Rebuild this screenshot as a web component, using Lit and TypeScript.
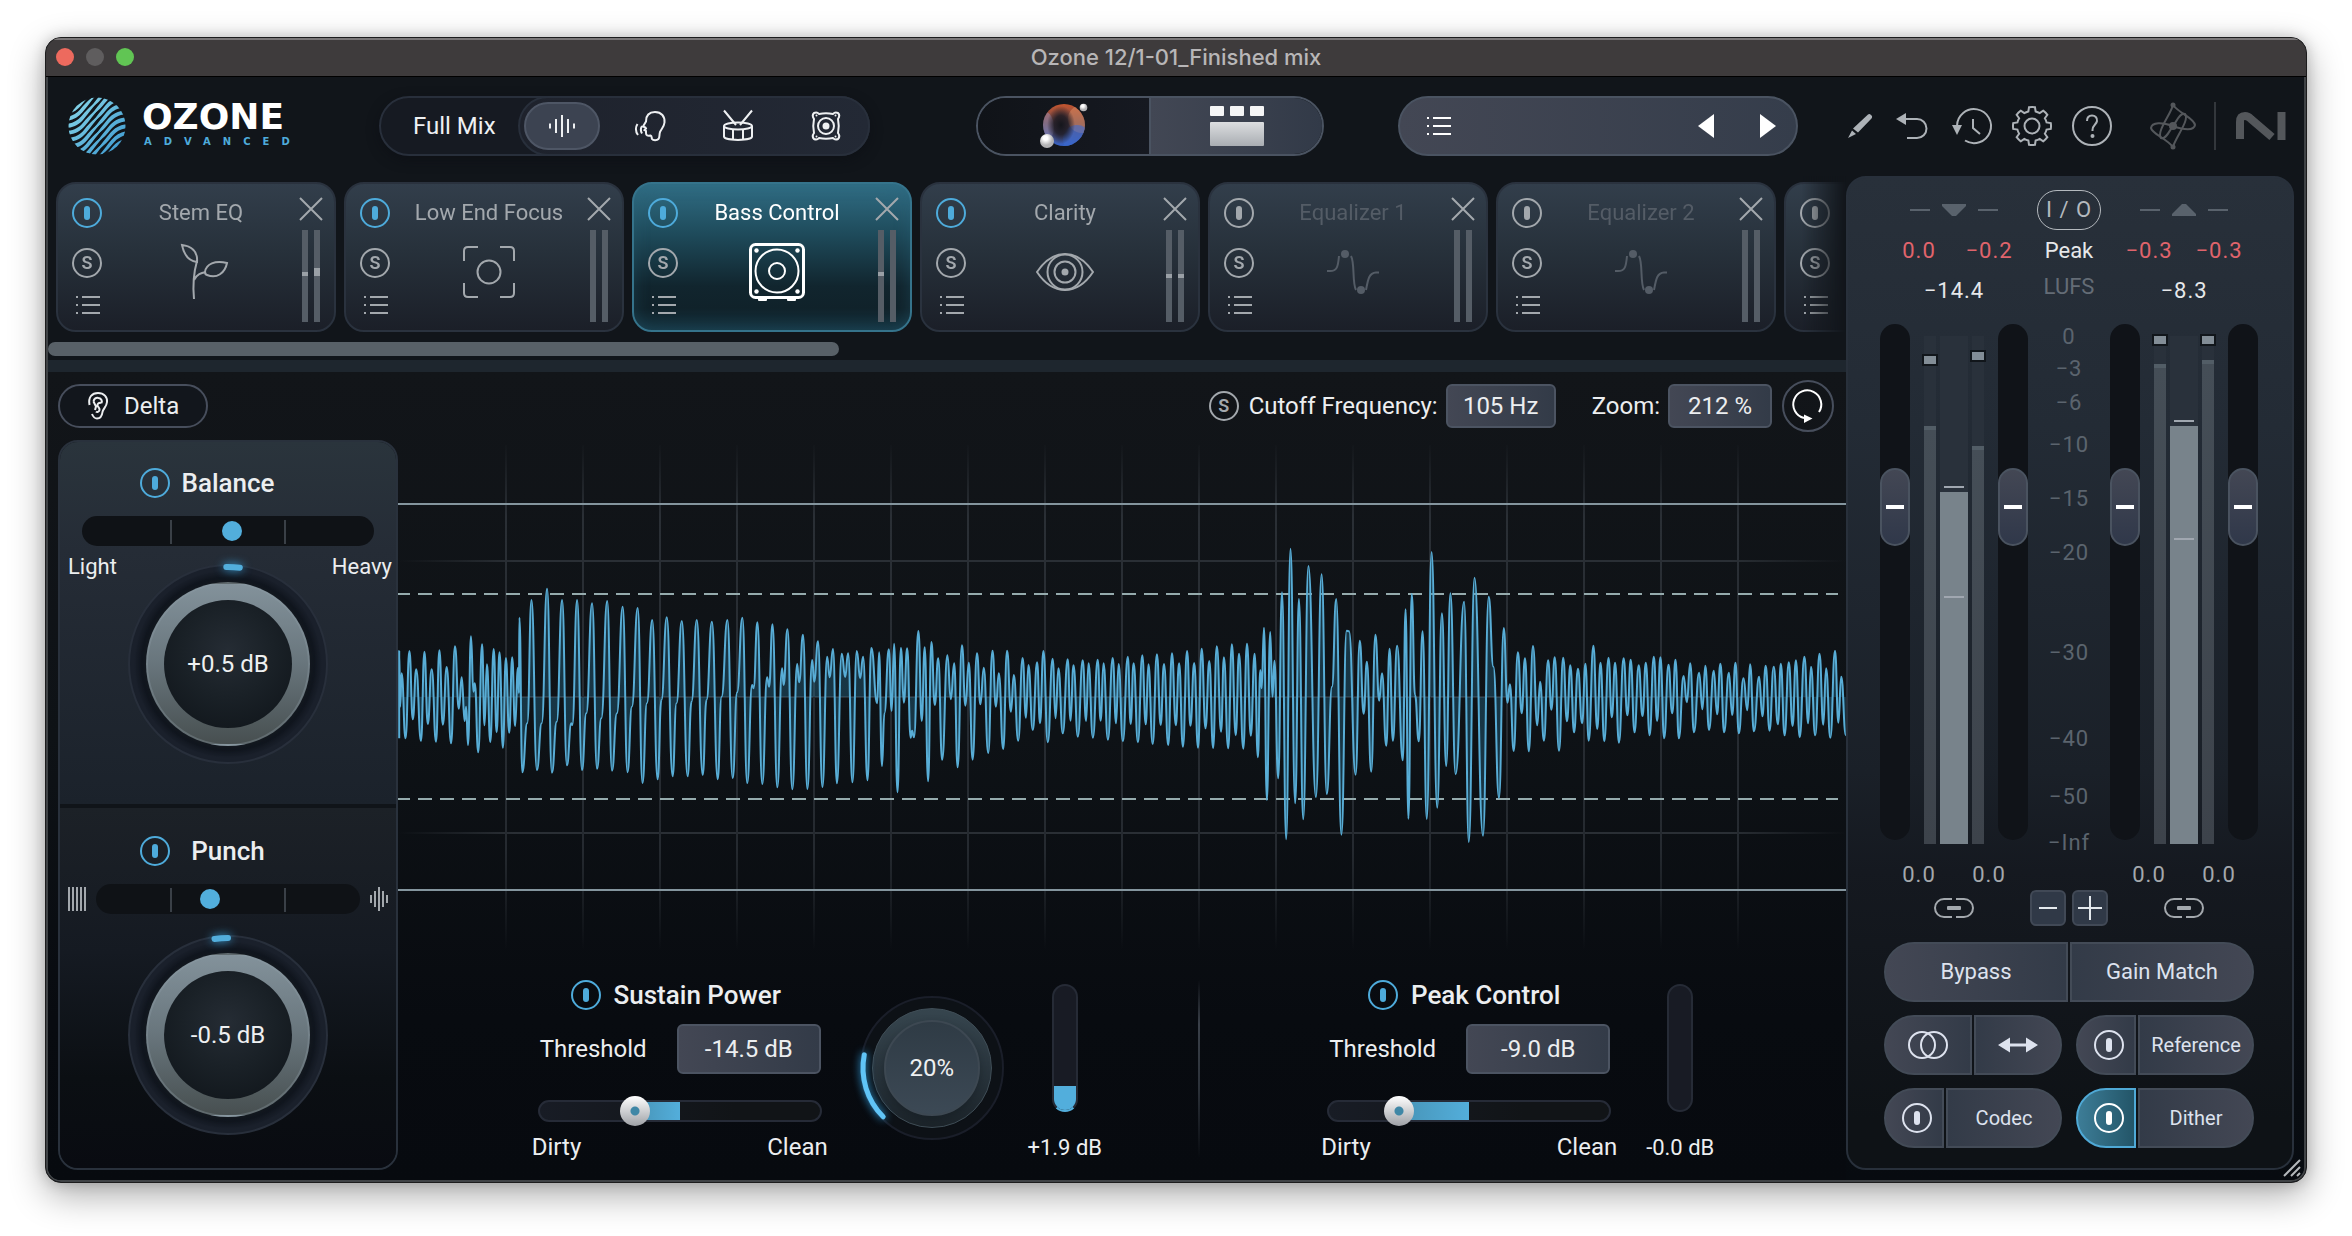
import { LitElement, html, svg, css, nothing } from "lit";
import { customElement, property } from "lit/decorators.js";
import { classMap } from "lit/directives/class-map.js";
import { styleMap } from "lit/directives/style-map.js";

const base = css`
  * { box-sizing: border-box; }
  button, input { font: inherit; color: inherit; margin: 0; }
  button { padding: 0; border: 0; background: none; display: grid; place-items: center; cursor: pointer; }
  svg { display: block; fill: none; stroke: currentColor; stroke-width: 2; overflow: visible; }
  .solid { fill: currentColor; stroke: none; }
  .power { width: 30px; height: 30px; color: #4eabdb; }
  .solo {
    width: 30px; height: 30px; border: 2px solid currentColor; border-radius: 50%;
    font-size: 18px; line-height: 24px; font-weight: 600; color: #a3a8ad;
  }
`;

const powerIcon = svg`<svg width="30" height="30" viewBox="0 0 30 30"><circle cx="15" cy="15" r="14"/><rect class="solid" x="12" y="8" width="6" height="14" rx="3"/></svg>`;
const listIcon = svg`<svg width="24" height="18" viewBox="0 0 24 18"><path d="M0 1h2M6 1h18M0 9h2M6 9h18M0 17h2M6 17h18"/></svg>`;
const closeIcon = svg`<svg width="22" height="22" viewBox="0 0 22 22"><path d="M0 0L22 22M22 0L0 22"/></svg>`;

const waveIcon = svg`<svg width="26" height="24" viewBox="0 0 26 24"><path d="M1 9.500v5M7 5v14M13 1v22M19 5v14M25 9.500v5"/></svg>`;
const voiceIcon = svg`<svg width="32" height="30" viewBox="0 0 32 30"><path d="M26 21C25 24 26 26 24.500 28C23 29.500 19 29.500 18 28C17.500 26.500 18 25 16.500 24.500C13.500 25 12 24.500 12 22V20L10.500 19L12 17.500L11.500 16.500L9 15.500L12 10.500C12 4.500 15 1 21 1C27.500 1 31 5.500 30.500 11.500C30 16 27.500 17.500 26 21Z"/><path d="M3.500 13C1.500 16 1.500 20.500 4 24M8 15C6.500 17.500 6.500 20 8 22.500"/></svg>`;
const drumIcon = svg`<svg width="30" height="31" viewBox="0 0 30 31"><path d="M1 0.500L13 15M29 0.500L17 15"/><ellipse cx="15" cy="16" rx="14" ry="3.600"/><path d="M1 16v10.500C1 31 29 31 29 26.500V16M10 19.500v9.500M20 19.500v9.500"/></svg>`;
const ampIcon = svg`<svg width="30" height="30" viewBox="0 0 30 30"><path d="M8 3Q15 1.500 22 3Q24 0.500 27 2Q29.500 4.500 27 8Q28.500 15 27 22Q29.500 25.500 27 28Q24 29.500 22 27Q15 28.500 8 27Q6 29.500 3 28Q0.500 25.500 3 22Q1.500 15 3 8Q0.500 4.500 3 2Q6 0.500 8 3Z"/><circle cx="15" cy="15" r="8"/><circle class="solid" cx="15" cy="15" r="3.500"/><circle class="solid" cx="5.500" cy="4.500" r="1"/><circle class="solid" cx="24.500" cy="4.500" r="1"/><circle class="solid" cx="5.500" cy="25.500" r="1"/><circle class="solid" cx="24.500" cy="25.500" r="1"/></svg>`;

const moduleIcons: Record<string, unknown> = {
  sprout: svg`<svg width="56" height="58" viewBox="0 0 56 58"><path d="M21 56C20 46 20 32 24 18"/><path d="M24 19C16 18 11 12 9 2C18 3 25 8 24 19Z"/><path d="M21 37C24 31 28 30 33 29"/><path d="M32 29C33 21 42 17 54 20C52 30 44 36 34 32C32 31.500 32 30 32 29Z"/></svg>`,
  focus: svg`<svg width="56" height="58" viewBox="0 0 56 58"><circle cx="28" cy="29" r="11.500"/><path d="M3 18V8Q3 4 7 4H17M39 4H49Q53 4 53 8V18M53 40V50Q53 54 49 54H39M17 54H7Q3 54 3 50V40"/></svg>`,
  speaker: svg`<svg width="56" height="58" viewBox="0 0 56 58"><rect x="1.500" y="1.500" width="53" height="53" rx="5" stroke-width="3"/><circle cx="28" cy="28" r="21.500"/><circle cx="28" cy="28" r="8"/><g class="solid"><circle cx="7.500" cy="7.500" r="2.200"/><circle cx="48.500" cy="7.500" r="2.200"/><circle cx="7.500" cy="48.500" r="2.200"/><circle cx="48.500" cy="48.500" r="2.200"/><path d="M9 55h9v2q0 1-1 1h-7q-1 0-1-1zM38 55h9v2q0 1-1 1h-7q-1 0-1-1z"/></g></svg>`,
  eye: svg`<svg width="58" height="58" viewBox="0 0 58 58"><path d="M1 29C9 17 19 11 29 11S49 17 57 29C49 41 39 47 29 47S9 41 1 29Z"/><circle cx="29" cy="29" r="17.500"/><circle cx="29" cy="29" r="10.500"/><circle class="solid" cx="29" cy="29" r="3.500"/></svg>`,
  curve: svg`<svg width="56" height="58" viewBox="0 0 56 58"><path d="M2 28H5C12 28 13 24 14 13M26 13C30 20 27 40 31 47M41 47C43 36 44 30 51 29.500H54"/><circle class="solid" cx="20" cy="11" r="4"/><circle class="solid" cx="36" cy="47" r="4"/></svg>`,
};

/** One processing module in the signal chain strip. */
@customElement("module-card")
class ModuleCard extends LitElement {
  @property() name = "";
  @property() icon = "";
  @property({ type: Boolean }) on = false;
  @property({ type: Boolean }) selected = false;
  @property({ attribute: false }) levels: number[][] = [];

  static styles = [base, css`
    :host { display: block; flex: none; width: 280px; color: #a3a8ad; }
    .card {
      height: 150px; border: 2px solid #2a323e; border-radius: 20px; padding: 12px 12px 8px 14px;
      background: linear-gradient(#323e4b, #27313b 45%, #1b1f28);
      display: grid; grid-template-columns: 30px 1fr 22px;
    }
    .card.selected {
      border-color: #35738b; color: #fff;
      background: linear-gradient(#306d84, #1e4a5a 35%, #11252e 70%, #10222a 85%, #153441);
      box-shadow: inset 0 0 16px #2d6a8055;
    }
    .left { display: grid; grid-template-rows: 34px 66px 18px; align-items: center; justify-items: center; align-content: start; }
    .left .off { color: #a3a8ad; }
    .menu { color: #a3a8ad; width: 26px; height: 18px; justify-items: end; }
    .mid { display: grid; grid-template-rows: 34px 1fr; justify-items: center; align-items: center; padding-bottom: 8px; }
    .name { font-size: 22px; line-height: 26px; white-space: nowrap; }
    .dim { color: #545c66; }
    .right { display: grid; grid-template-rows: 34px 92px; justify-items: center; align-content: start; }
    .close { width: 22px; height: 22px; color: #a3a8ad; margin-top: 2px; }
    .bars { display: flex; gap: 6px; }
    .bar { width: 6px; height: 92px; background: #555d66; position: relative; }
    .tick { position: absolute; left: 0; right: 0; background: #9aa0a6; }
  `];

  render() {
    return html`<section class=${classMap({ card: true, selected: this.selected })}>
      <div class="left">
        <button class=${classMap({ power: true, off: !this.on })} aria-label="Power">${powerIcon}</button>
        <button class="solo" aria-label="Solo">S</button>
        <button class="menu" aria-label="Presets">${listIcon}</button>
      </div>
      <div class=${classMap({ mid: true, dim: !this.on })}>
        <span class="name">${this.name}</span>
        ${moduleIcons[this.icon] ?? nothing}
      </div>
      <div class="right">
        <button class="close" aria-label="Remove">${closeIcon}</button>
        <div class="bars">${[0, 1].map((i) => html`<span class="bar">${this.levels[i]
          ? html`<span class="tick" style=${styleMap({ top: this.levels[i][0] + "px", height: this.levels[i][1] + "px" })}></span>` : nothing}</span>`)}
        </div>
      </div>
    </section>`;
  }
}

/** Point on a circle of radius r; angle in degrees clockwise from twelve o'clock. */
const polar = (r: number, deg: number) => {
  const a = (deg * Math.PI) / 180;
  return `${(r * Math.sin(a)).toFixed(2)} ${(-r * Math.cos(a)).toFixed(2)}`;
};
const arcPath = (r: number, from: number, to: number) => `M${polar(r, from)}A${r} ${r} 0 0 1 ${polar(r, to)}`;

@customElement("value-knob")
class ValueKnob extends LitElement {
  @property() text = "";
  @property() label = "";
  @property({ type: Boolean }) small = false;
  @property({ type: Number }) from = 0;
  @property({ type: Number }) to = 0;
  @property({ type: Number }) value = 50;

  static styles = [base, css`
    :host { display: block; }
    .knob { display: grid; place-items: center; width: 200px; height: 200px; border-radius: 50%; border: 2px solid #282f3b; background: radial-gradient(#0c1118 58%, #1a202b 68%); }
    .knob > * { grid-area: 1 / 1; }
    .ring { width: 164px; height: 164px; border-radius: 50%; background: linear-gradient(#83929b, #68757c 50%, #474f50); border: 2px solid #8fa0a855; box-shadow: 0 0 8px #0a0e14, 0 0 5px #7f919a44; }
    .face { width: 128px; height: 128px; border-radius: 50%; background: radial-gradient(circle at 50% 40%, #252c34, #1a2127 45%, #0e1318); }
    .value { font-size: 24px; line-height: 28px; color: #eef0f1; }
    .arc { stroke: #52aedc; stroke-width: 6; stroke-linecap: round; filter: drop-shadow(0 0 5px #3a9fd8); }
    .range { width: 100%; height: 100%; opacity: 0; cursor: pointer; }
    .small { width: 144px; height: 144px; border-color: #1a1e29; background: #0d1116; }
    .small .ring { width: 120px; height: 120px; background: linear-gradient(#36454e, #27323a 60%, #1c242a); border: 1px solid #3f4d56; box-shadow: none; }
    .small .face { width: 96px; height: 96px; background: linear-gradient(#2f3b45, #3c4955); border: 2px solid #3d4852; box-shadow: 0 4px 8px #10161b66; }
    .small .arc { stroke: #60c4f6; stroke-width: 5; filter: drop-shadow(0 0 4px #2f9fe0); }
  `];

  render() {
    return html`<div class=${classMap({ knob: true, small: this.small })}>
      <span class="ring"></span><span class="face"></span>
      <svg width="2" height="2" viewBox="-1 -1 2 2"><path class="arc" d=${arcPath(this.small ? 69 : 97, this.from, this.to)}/></svg>
      <span class="value">${this.text}</span>
      <input class="range" type="range" aria-label=${this.label} .value=${String(this.value)}>
    </div>`;
  }
}

interface Channel { level: number; peak: number }
interface MeterData { left: Channel; right: Channel; loudness: number; hold: number; average: number }

const meterPercent = (px: number) => `${((px / 508) * 100).toFixed(2)}%`;

const inputMeter: MeterData = { left: { level: 90, peak: 18 }, right: { level: 110, peak: 14 }, loudness: 156, hold: 150, average: 260 };
const outputMeter: MeterData = { left: { level: 28, peak: -2 }, right: { level: 24, peak: -2 }, loudness: 90, hold: 84, average: 202 };

const scaleMarks: [string, number][] = [
  ["0", 0], ["−3", 32], ["−6", 66], ["−10", 108], ["−15", 162], ["−20", 216], ["−30", 316], ["−40", 402], ["−50", 460], ["−Inf", 506],
];

@customElement("io-panel")
class IoPanel extends LitElement {
  static styles = [base, css`
    :host { display: block; }
    .panel {
      height: 100%; border: 2px solid #28303b; border-radius: 20px; padding: 12px 34px 20px 32px;
      background: linear-gradient(#28303a, #232b35 25%, #1a2028 60%, #151920 70%, #0e1216 95%);
      display: flex; flex-direction: column; color: #e6e8ea;
    }
    .row { display: grid; grid-template-columns: 148px 1fr 148px; justify-items: center; align-items: center; }
    .pair { display: grid; grid-template-columns: 70px 70px; justify-items: center; }
    .num { font-size: 22px; line-height: 24px; letter-spacing: 1px; }
    .peak { margin-top: 9px; font-size: 22px; line-height: 24px; }
    .red { color: #e0646c; }
    .lufs { margin-top: 12px; font-size: 22px; line-height: 24px; align-items: start; }
    .lufs .num { padding-top: 4px; }
    .faint { color: #646c76; }
    .dir { color: #59626c; }
    .io { width: 64px; height: 40px; border: 1px solid #b4b9be; border-radius: 20px; color: #b4b9be; }
    .meters { flex: 1; min-height: 400px; margin-top: 21px; display: grid; grid-template-columns: 148px 1fr 148px; }
    .group { display: grid; grid-template-columns: 30px 60px 30px; justify-content: space-between; }
    .strips { display: grid; grid-template-columns: 12px 28px 12px; column-gap: 4px; padding-top: 12px; }
    .strip { position: relative; background: #29313b; }
    .fill { position: absolute; left: 0; right: 0; bottom: 0; background: linear-gradient(#454e57, #3d434b); border-top: 4px solid #525d66; }
    .wide .fill { background: #78838b; border: 0; }
    .hold { position: absolute; left: 4px; right: 4px; height: 2px; background: #a0a7b0; }
    .marker { position: absolute; left: -2px; right: -2px; height: 12px; background: #828d96; border: 2px solid #11161b; }
    .fader { -webkit-appearance: none; appearance: none; writing-mode: vertical-lr; direction: rtl; width: 30px; height: calc(100% - 4px); min-height: 0; border-radius: 15px; background: #101318; }
    .fader::-webkit-slider-runnable-track { width: 30px; height: 100%; background: none; }
    .fader::-webkit-slider-thumb {
      -webkit-appearance: none; width: 30px; height: 78px; border: 2px solid #4a5360; border-radius: 15px;
      background: linear-gradient(#fff, #fff) 50% 50% / 18px 4px no-repeat, linear-gradient(#434754, #30384a);
    }
    .scale { position: relative; margin-top: 12px; font-size: 22px; line-height: 24px; letter-spacing: 1px; color: #5b646e; }
    .mark { position: absolute; left: 0; right: 0; text-align: center; margin-top: -11px; }
    .gains { margin-top: 19px; color: #a3a8ad; }
    .tools { margin-top: 3px; height: 36px; color: #a3a8ad; }
    .steps { display: flex; gap: 6px; color: #e4e9ed; }
    .step { width: 36px; height: 36px; border: 2px solid #414956; border-radius: 6px; background: #303947; }
    .pads { margin: 16px 4px 0; display: grid; grid-template-columns: 1fr 1fr; gap: 13px 14px; }
    .split { display: flex; gap: 2px; color: #dde2ee; }
    .full { grid-column: 1 / -1; }
    .pad { flex: 1; height: 60px; border: 2px solid #434b57; font-size: 22px; line-height: 26px; background: linear-gradient(90deg, #434754, #333b48); }
    .pad:first-child { border-radius: 30px 0 0 30px; }
    .pad:last-child { border-radius: 0 30px 30px 0; background: linear-gradient(90deg, #333b48, #434754); }
    .pad.key { flex: 0 0 60px; padding-left: 6px; }
    .small { font-size: 20px; line-height: 24px; }
    .pad.lit { color: #fff; border-color: #4fa9d6; background: linear-gradient(90deg, #3d7d97, #235568); }
  `];

  private fader(label: string) {
    return html`<input class="fader" type="range" min="0" max="438" .value=${"294"} aria-label=${label}>`;
  }

  private channel(c: Channel) {
    return html`<span class="strip">
      <span class="fill" style=${styleMap({ top: meterPercent(c.level) })}></span>
      <span class="marker" style=${styleMap({ top: meterPercent(c.peak) })}></span></span>`;
  }

  private group(name: string, m: MeterData) {
    return html`<div class="group">${this.fader(name + " left gain")}
      <div class="strips">${this.channel(m.left)}
        <span class="strip wide">
          <span class="fill" style=${styleMap({ top: meterPercent(m.loudness) })}></span>
          <span class="hold" style=${styleMap({ top: meterPercent(m.hold) })}></span>
          <span class="hold" style=${styleMap({ top: meterPercent(m.average) })}></span>
        </span>${this.channel(m.right)}</div>
      ${this.fader(name + " right gain")}</div>`;
  }

  render() {
    const link = svg`<svg width="40" height="20" viewBox="0 0 40 20"><path d="M18 1H10A9 9 0 0 0 10 19H18M22 1H30A9 9 0 0 1 30 19H22"/><rect class="solid" x="13" y="8" width="14" height="4" rx="1"/></svg>`;
    const down = svg`<svg class="dir" width="88" height="14" viewBox="0 0 88 14"><path d="M0 7h20M68 7h20"/><path class="solid" d="M32 1h24v2L46 13h-4L32 3z"/></svg>`;
    const up = svg`<svg class="dir" width="88" height="14" viewBox="0 0 88 14"><path d="M0 7h20M68 7h20"/><path class="solid" d="M32 13h24v-2L46 1h-4L32 11z"/></svg>`;
    return html`<aside class="panel">
      <div class="row">${down}<button class="io num">I / O</button>${up}</div>
      <div class="row peak">
        <div class="pair num red"><span>0.0</span><span>−0.2</span></div><span>Peak</span>
        <div class="pair num red"><span>−0.3</span><span>−0.3</span></div>
      </div>
      <div class="row lufs"><span class="num">−14.4</span><span class="faint">LUFS</span><span class="num">−8.3</span></div>
      <div class="meters">
        ${this.group("Input", inputMeter)}
        <div class="scale">${scaleMarks.map(([t, y]) => html`<span class="mark" style=${styleMap({ top: meterPercent(y) })}>${t}</span>`)}</div>
        ${this.group("Output", outputMeter)}
      </div>
      <div class="row gains">
        <div class="pair num"><span>0.0</span><span>0.0</span></div><span></span>
        <div class="pair num"><span>0.0</span><span>0.0</span></div>
      </div>
      <div class="row tools">
        <button aria-label="Link input gains">${link}</button>
        <div class="steps">
          <button class="step" aria-label="Zoom out"><svg width="24" height="24" viewBox="0 0 24 24"><path d="M3 12h18"/></svg></button>
          <button class="step" aria-label="Zoom in"><svg width="24" height="24" viewBox="0 0 24 24"><path d="M0 12h24M12 0v24"/></svg></button>
        </div>
        <button aria-label="Link output gains">${link}</button>
      </div>
      <div class="pads">
        <div class="split full"><button class="pad">Bypass</button><button class="pad">Gain Match</button></div>
        <div class="split">
          <button class="pad" aria-label="Mono"><svg width="40" height="28" viewBox="0 0 40 28"><circle cx="14" cy="14" r="13"/><circle cx="26" cy="14" r="13"/></svg></button>
          <button class="pad" aria-label="Swap channels"><svg width="40" height="16" viewBox="0 0 40 16"><path d="M8 8h24" stroke-width="3"/><path class="solid" d="M0 8L12 0.500V15.500zM40 8L28 0.500V15.500z"/></svg></button>
        </div>
        <div class="split"><button class="pad key" aria-label="Reference power">${powerIcon}</button><button class="pad small">Reference</button></div>
        <div class="split"><button class="pad key" aria-label="Codec power">${powerIcon}</button><button class="pad small">Codec</button></div>
        <div class="split"><button class="pad key lit" aria-label="Dither power">${powerIcon}</button><button class="pad small">Dither</button></div>
      </div>
    </aside>`;
  }
}

/* Turning points of the displayed audio: x, y pairs, y measured down from the top of the graph in thirds of a unit. */
const firstHalf = [
  19,895,19,633,21,800,24,700,32,895,40,633,47,838,54,688,64,903,71,635,78,852,86,688,95,905,102,631,109,854,117,681,126,910,134,619,142,806,148,712,
  154,843,157,800,161,915,167,589,172,755,175,730,182,937,190,613,195,856,200,673,207,906,214,627,220,877,226,637,233,923,239,654,246,878,252,652,
  258,858,264,683,266,760,267,533,273,997,283,850,292,480,303,990,313,850,324,446,334,998,344,845,355,480,365,976,374,850,376,855,386,480,396,990,
  405,820,417,490,427,986,436,835,448,483,458,992,468,820,480,500,490,997,499,800,511,504,521,1029,530,790,541,540,552,1018,560,780,571,532,583,1009,
  591,790,602,543,614,1009,622,785,633,540,645,1005,653,780,664,545,676,1018,684,770,696,540,707,1014,716,757,727,533,737,1029,747,735,750,745,
  758,547,768,1032,778,712,782,740,789,553,799,1042,809,685,812,735,820,568,830,1048,840,672,844,727,852,584,861,1047,871,660,875,725,883,604,892,1041,
  902,650,907,712,914,627,922,1030,932,641,939,711,945,640,954,1027,963,633,970,715,976,650,985,1021,993,624,1005,790,1009,637,1015,978,1020,820,
  1029,628,1035,813,1040,611,1047,1057,1054,624,1060,788,1067,625,1074,893,1077,872,1081,892,1090,573,1097,843,1103,622,1110,1024,1117,606,1124,795,
  1131,655,1139,959,1150,646,1157,778,1164,670,1171,982,1180,616,1187,797,1194,668,1202,959,1211,640,1218,793,1225,683,1234,939,1243,632,1250,800,
  1256,700,1265,927,1273,632,1281,815,1287,705,1296,902,1305,654,1312,833,1317,675,1326,870,1335,667,1341,850,1348,633,1357,907,1367,656,1373,835,
  1379,685,1388,880,1398,658,1404,842,1410,676,1419,890,1429,661,1436,843,1441,670,1450,893,1460,659,1466,842,1472,670,1481,899,1491,654,1498,850,
  1503,672,1512,904,1522,650,1528,852,1534,670,1543,907,1552,646,1559,853,
];
const secondHalf = [
  39,673,48,912,57,643,65,855,72,672,81,915,89,640,97,856,104,670,112,920,121,633,128,857,136,669,144,923,152,626,160,865,168,663,176,924,184,619,193,875,
  199,652,208,925,216,613,224,886,231,641,240,926,248,611,256,887,264,641,271,952,276,690,279,745,284,563,290,1080,297,576,302,770,306,662,314,1015,
  322,457,331,1198,340,326,350,1090,358,477,367,1138,378,378,394,1071,406,403,417,1062,428,740,437,477,448,1184,459,572,464,574,478,1004,487,602,495,821,
  502,665,511,995,520,584,528,782,534,700,543,917,550,626,557,902,566,617,578,961,584,508,590,1136,597,462,604,765,612,904,620,574,629,1137,639,336,
  651,1103,661,520,670,978,679,460,690,1003,708,485,718,1206,730,413,748,1187,760,470,770,680,782,1074,792,564,800,788,805,733,813,933,822,637,830,820,
  837,655,845,934,854,618,863,856,869,725,877,902,886,661,893,809,900,652,909,932,918,653,926,844,933,676,941,877,949,686,958,850,965,671,972,902,982,617,
  990,867,997,668,1005,904,1014,653,1021,832,1028,668,1036,908,1046,655,1054,826,1061,659,1069,877,1078,676,1086,828,1093,668,1101,886,1110,650,1117,843,
  1124,652,1132,895,1141,674,1149,820,1156,659,1163,895,1173,708,1180,787,1187,670,1195,877,1206,698,1213,808,1219,677,1227,870,1237,692,1244,823,
  1251,671,1259,877,1269,698,1276,825,1283,668,1290,880,1300,715,1308,811,1314,673,1322,874,1333,710,1340,829,1347,677,1355,872,1364,680,1373,853,
  1379,671,1387,886,1396,667,1404,858,1411,661,1419,892,1429,650,1437,850,1443,680,1452,886,1461,641,1469,854,1475,685,1484,893,1494,632,1501,848,
  1507,710,1517,886,
];

const toPoints = (raw: number[], origin: number, scale: number) => {
  const out: [number, number][] = [];
  for (let i = 0; i < raw.length; i += 2) out.push([origin + raw[i] / scale, raw[i + 1] / 3]);
  return out;
};
const wavePoints = [...toPoints(firstHalf, -8, 2.063), ...toPoints(secondHalf, 732, 2.119)];
const waveCurve = wavePoints.slice(1).map(([x, y], i) => {
  const [px, py] = wavePoints[i];
  const mx = ((px + x) / 2).toFixed(1);
  return `C${mx} ${py.toFixed(1)} ${mx} ${y.toFixed(1)} ${x.toFixed(1)} ${y.toFixed(1)}`;
}).join("");
const waveStart = wavePoints[0].map((n) => n.toFixed(1)).join(" ");
const wavePath = `M${waveStart}${waveCurve}`;
const waveBody = `M1 257L${waveStart}${waveCurve}V257Z`;

interface Band { name: string; threshold: string; position: number; gain: string; fill: number }

@customElement("bass-control")
class BassControl extends LitElement {
  static styles = [base, css`
    :host { display: flex; flex-direction: column; flex: 1; background: linear-gradient(#121519, #0e1216 45%, #080b10 80%, #070a0f); color: #eceef0; }
    .toolbar { display: flex; align-items: center; height: 68px; padding: 0 12px 0 10px; font-size: 24px; line-height: 28px; }
    .delta { display: flex; align-items: center; gap: 16px; width: 150px; height: 44px; padding-left: 28px; border: 2px solid #474e5c; border-radius: 22px; background: #12161c; margin-right: auto; }
    .toolbar label { margin: 0 8px 0 10px; }
    .box { border: 2px solid #4c5462; border-radius: 6px; background: linear-gradient(90deg, #434754, #333b48); text-align: center; padding: 0; font-size: 24px; line-height: 28px; }
    .freq { width: 110px; height: 44px; margin-right: 26px; }
    .zoom { width: 104px; height: 44px; }
    .reset { width: 52px; height: 52px; margin-left: 10px; border: 2px solid #474e5c; border-radius: 50%; color: #fff; }
    .work { flex: 1; display: grid; grid-template-columns: 340px minmax(0, 1fr); padding-left: 10px; }
    .side { border: 2px solid #29313c; border-radius: 20px; margin-bottom: 10px; overflow: hidden; display: grid; grid-template-rows: 362px 4px 1fr; background: #101419; }
    .side section { padding-top: 26px; background: linear-gradient(#2a343c, #252c36 30%, #1b222b); }
    .side section:last-child { padding-top: 28px; background: linear-gradient(#1c2127, #151a22 40%, #0b0f13 75%, #090b11); }
    .side h2 { margin: 0; display: grid; grid-template-columns: 30px 1fr 30px; padding: 0 80px; justify-items: center; }
    .title { font-size: 26px; line-height: 30px; font-weight: 500; white-space: nowrap; }
    .pan { -webkit-appearance: none; appearance: none; display: block; height: 30px; border-radius: 15px;
      background: linear-gradient(90deg, transparent calc(50% - 58px), #3a4047 0, #3a4047 calc(50% - 56px), transparent 0, transparent calc(50% + 56px), #3a4047 0, #3a4047 calc(50% + 58px), transparent 0) 0 4px / 100% 24px no-repeat #0f1216; }
    .pan::-webkit-slider-thumb { -webkit-appearance: none; width: 20px; height: 20px; border-radius: 50%; background: #52aedc; }
    .pan-row { display: grid; grid-template-columns: 1fr; margin: 18px 22px 0; }
    .pan-row.icons { grid-template-columns: 18px 1fr 18px; align-items: center; gap: 10px; margin: 18px 8px 0; color: #a3a8ad; }
    .dial { display: grid; grid-template-columns: 1fr 200px 1fr; margin-top: 9px; font-size: 22px; line-height: 24px; }
    .dial value-knob { grid-column: 2; margin-top: 9px; }
    .dial.lower { margin-top: 12px; }
    .light { padding-left: 8px; }
    .heavy { justify-self: end; padding-right: 4px; }
    .view { display: flex; flex-direction: column; min-width: 0; }
    .graph { flex: 1; min-height: 300px; width: 100%; overflow: hidden; }
    .limit { stroke: #84959e; stroke-width: 2; }
    .dash { stroke: #95abad; stroke-width: 2; stroke-dasharray: 14 8; stroke-dashoffset: 2; }
    .audio { stroke: #58add6; stroke-width: 2; stroke-linejoin: round; }
    .body { stroke: none; fill: #2f87b0; opacity: 0.3; }
    .bands { height: 230px; padding-top: 30px; display: grid; grid-template-columns: 801fr 2px 646fr; }
    .rule { height: 178px; background: linear-gradient(transparent, #3a4049 25%, #2c323a 60%, transparent); }
    .band { display: flex; justify-content: center; }
    .wide { padding-left: 37px; }
    .narrow { padding-right: 8px; }
    .controls { width: 296px; }
    .band h2 { margin: 0; display: flex; gap: 13px; justify-content: center; padding-right: 10px; }
    .wide h2 { padding-right: 8px; }
    .threshold { display: flex; justify-content: space-between; align-items: center; margin: 14px 7px 0 8px; height: 50px; font-size: 24px; line-height: 28px; }
    .threshold .box { width: 144px; height: 50px; }
    .tone { -webkit-appearance: none; appearance: none; display: block; width: calc(100% - 12px); height: 30px; margin: 22px 6px 0; background: none; }
    .tone::-webkit-slider-runnable-track { height: 22px; border: 2px solid #262b37; border-radius: 11px;
      background: linear-gradient(90deg, transparent var(--at), #4590b2 var(--at), #53aedb 50%, transparent 50%), linear-gradient(90deg, #181c25, #111417 70%); }
    .tone::-webkit-slider-thumb { -webkit-appearance: none; width: 30px; height: 30px; margin-top: -6px; border-radius: 50%;
      background: radial-gradient(circle, #3f87a6 4px, transparent 5px), linear-gradient(#fff, #9ea1a6); }
    .ends { display: flex; justify-content: space-between; margin-top: 7px; font-size: 24px; line-height: 28px; }
    .band value-knob { margin: 16px 24px 0 32px; }
    .gain { padding-top: 4px; display: flex; flex-direction: column; align-items: center; gap: 22px; width: 74px; font-size: 22px; line-height: 28px; white-space: nowrap; }
    .narrow .gain { margin-left: 26px; }
    .well { width: 26px; height: 128px; border: 2px solid #262b36; border-radius: 13px; background: #181b24; overflow: hidden; display: flex; flex-direction: column; justify-content: flex-end; }
    .filled { border-bottom-color: #52aedc; }
    .amount { background: #52aedc; margin: 0 -2px; }
  `];

  private band(b: Band, id: string, knob = false) {
    return html`<div class=${classMap({ band: true, wide: knob, narrow: !knob })}>
      <div class="controls">
        <h2><button class="power" aria-label="${b.name} power">${powerIcon}</button><span class="title">${b.name}</span></h2>
        <div class="threshold"><label for=${id}>Threshold</label><input id=${id} class="box" .value=${b.threshold}></div>
        <input class="tone" type="range" min="0" max="100" step="0.1" aria-label="${b.name} tone" .value=${String(b.position)} style=${styleMap({ "--at": b.position + "%" })}>
        <div class="ends"><span>Dirty</span><span>Clean</span></div>
      </div>
      ${knob ? html`<value-knob small text="20%" label="Sustain amount" from="-135" to="-79" value="20"></value-knob>` : nothing}
      <div class="gain">
        <span class=${classMap({ well: true, filled: b.fill > 0 })}><span class="amount" style=${styleMap({ height: b.fill + "px" })}></span></span>
        <span>${b.gain}</span>
      </div>
    </div>`;
  }

  render() {
    const columns = Array.from({ length: 17 }, (_, i) => 107 + i * 77);
    return html`
      <div class="toolbar">
        <button class="delta"><svg width="20" height="28" viewBox="0 0 20 28"><path d="M1.500 13C0 5 4 1 10 1C16 1 19.500 5 19 10C18.500 15 15.500 16 14.500 20C14 24 12 26.500 9 26.500C6 26.500 5 24.500 4 22"/><path d="M5.500 9.500C6 6.500 8 5.500 10.500 6C13.500 6.500 14.500 9 13.500 11M13.500 11C11 10.500 9 11.500 9.500 13.500C10 15.500 12 16 11.500 18C11 20 9 20.500 8 19.500M5.500 9.500L8 14.500L7 18"/></svg>Delta</button>
        <button class="solo" aria-label="Solo low band">S</button>
        <label for="cutoff">Cutoff Frequency:</label><input id="cutoff" class="box freq" .value=${"105 Hz"}>
        <label for="zoom">Zoom:</label><input id="zoom" class="box zoom" .value=${"212 %"}>
        <button class="reset" aria-label="Reset view"><svg width="32" height="34" viewBox="0 0 32 34"><path d="M27 23A14 14 0 1 0 12 29"/><path class="solid" d="M12 25.500L20.500 29.500L12 34z"/></svg></button>
      </div>
      <div class="work">
        <div class="side">
          <section>
            <h2><button class="power" aria-label="Balance power">${powerIcon}</button><span class="title">Balance</span></h2>
            <div class="pan-row"><input class="pan" type="range" min="0" max="272" aria-label="Balance meter" .value=${"140"}></div>
            <div class="dial"><span class="light">Light</span><value-knob text="+0.5 dB" label="Balance" from="-1" to="7"></value-knob><span class="heavy">Heavy</span></div>
          </section>
          <span></span>
          <section>
            <h2><button class="power" aria-label="Punch power">${powerIcon}</button><span class="title">Punch</span></h2>
            <div class="pan-row icons">
              <svg width="18" height="24" viewBox="0 0 18 24"><path d="M1 0v24M5 0v24M9 0v24M13 0v24M17 0v24"/></svg>
              <input class="pan" type="range" min="0" max="244" aria-label="Punch meter" .value=${"104"}>
              <svg width="18" height="24" viewBox="0 0 18 24"><path d="M1 8v8M5 4v16M9 0v24M13 4v16M17 8v8"/></svg>
            </div>
            <div class="dial lower"><value-knob text="-0.5 dB" label="Punch" from="-8" to="0"></value-knob></div>
          </section>
        </div>
        <div class="view">
          <svg class="graph" viewBox="0 0 1448 510" preserveAspectRatio="none" role="img" aria-label="Waveform">
            <defs>
              <linearGradient id="fade-v" x1="0" y1="0" x2="0" y2="510" gradientUnits="userSpaceOnUse"><stop offset="0" stop-color="#2a2f35" stop-opacity="0"/><stop offset="0.150" stop-color="#2a2f35"/><stop offset="0.800" stop-color="#252a30"/><stop offset="1" stop-color="#2a2f35" stop-opacity="0"/></linearGradient>
              <linearGradient id="fade-h" x1="0" y1="0" x2="1448" y2="0" gradientUnits="userSpaceOnUse"><stop offset="0" stop-color="#2a2f35" stop-opacity="0"/><stop offset="0.080" stop-color="#2a2f35"/><stop offset="0.920" stop-color="#2a2f35"/><stop offset="1" stop-color="#2a2f35" stop-opacity="0"/></linearGradient>
            </defs>
            ${[121, 257, 393].map((y) => svg`<rect x="0" y=${y - 1} width="1448" height="2" fill="url(#fade-h)" stroke="none"/>`)}
            ${columns.map((x) => svg`<rect x=${x} y="5" width="2" height="505" fill="url(#fade-v)" stroke="none"/>`)}
            <path class="dash" d="M0 154H1440M0 359H1440"/>
            <path class="body" d=${waveBody}/>
            <path class="audio" d=${wavePath}/>
            <path class="limit" d="M0 64H1448M0 450H1448"/>
          </svg>
          <div class="bands">
            ${this.band({ name: "Sustain Power", threshold: "-14.5 dB", position: 32, gain: "+1.9 dB", fill: 24 }, "sustain", true)}
            <span class="rule"></span>
            ${this.band({ name: "Peak Control", threshold: "-9.0 dB", position: 22, gain: "-0.0 dB", fill: 0 }, "peak")}
          </div>
        </div>
      </div>`;
  }
}

@customElement("app-root")
class AppRoot extends LitElement {
  static styles = [base, css`
    :host { display: flex; flex-direction: column; min-height: 100vh; box-sizing: border-box; padding: 37px 45px 53px; background: #fff; font-family: Roboto, "Liberation Sans", sans-serif; }
    .window { flex: 1; display: flex; flex-direction: column; border: 1px solid #1c1c1d; border-radius: 16px; overflow: hidden; background: #11151a; box-shadow: 0 12px 36px #00000055, 0 0 14px #0000002e; }
    .titlebar { height: 39px; flex: none; display: grid; grid-template-columns: 1fr auto 1fr; align-items: center; padding: 0 10px 2px; background: #3e3b3c; border-top: 2px solid #7a7778; border-bottom: 1px solid #000; color: #b8b6b7; font: 500 22px/26px Inter, Roboto, sans-serif; }
    .lights { display: flex; gap: 12px; }
    .lights button { width: 18px; height: 18px; border-radius: 50%; }
    .red { background: #ed6a5e; } .gray { background: #5f5d5e; } .green { background: #61c554; }
    .body { flex: 1; display: flex; flex-direction: column; border: 2px solid #3f4245; border-top: 0; border-radius: 0 0 15px 15px; overflow: hidden; position: relative; background: #0b0f13; }
    .header { height: 99px; flex: none; display: flex; align-items: center; padding: 0 18px 2px 20px; background: #11151a; }
    .brand { width: 311px; display: flex; align-items: center; gap: 16px; }
    .word { display: block; font: 700 36px/30px "DejaVu Sans", sans-serif; color: #fff; }
    .edition { display: block; font: 700 10px/16px "DejaVu Sans", sans-serif; letter-spacing: 12px; color: #4eabdb; margin-top: 2px; padding-left: 2px; }
    .modes { display: flex; align-items: center; justify-content: space-between; width: 491px; height: 60px; border: 2px solid #282f3b; border-radius: 30px; background: #161a22; color: #eef0f2; box-shadow: 0 4px 12px #0b0e1288; }
    .mode-name { padding-left: 32px; font-size: 24px; line-height: 28px; }
    .mode-set { display: flex; align-items: center; gap: 12px; height: 60px; padding: 0 4px; border: 2px solid #282f3b; border-radius: 30px; background: linear-gradient(90deg, #1e222c, #232935); margin-right: -2px; }
    .mode { width: 76px; height: 48px; border-radius: 24px; }
    .active { background: #3c4351; border: 2px solid #4e5665; }
    .views { width: 348px; height: 60px; margin: 0 74px 0 106px; display: flex; border: 2px solid #4a5361; border-radius: 30px; overflow: hidden; }
    .viewtab { flex: 1; background: linear-gradient(90deg, #101318, #161921); }
    .viewtab + .viewtab { border-left: 2px solid #4a5361; background: linear-gradient(90deg, #424754, #323a48); }
    .preset { flex: 1; height: 60px; display: flex; align-items: center; gap: 45px; border: 2px solid #4a5361; border-radius: 30px; padding: 0 20px 0 27px; background: linear-gradient(90deg, #434754, #353d4b); color: #fff; }
    .preset button:first-child { margin-right: auto; }
    .actions { display: flex; align-items: center; gap: 20px; margin-left: 50px; color: #adb2b7; }
    .actions button { width: 40px; height: 40px; }
    .actions .edit { width: 24px; }
    .marks { display: flex; align-items: center; margin-left: 38px; color: #54575b; gap: 18px; }
    .bar { width: 2px; height: 48px; background: #33373c; margin-right: 2px; }
    .main { flex: 1; display: grid; grid-template-columns: minmax(0, 1fr) 448px; padding-right: 10px; background: linear-gradient(#11151a, #11151a 200px, #070b10); }
    .left { display: flex; flex-direction: column; min-width: 0; }
    .chain { display: flex; gap: 8px; padding: 6px 0 0 8px; overflow: hidden; background: #11151a; -webkit-mask-image: linear-gradient(90deg, #000 calc(100% - 44px), transparent); mask-image: linear-gradient(90deg, #000 calc(100% - 44px), transparent); }
    .scroll { padding: 10px 0 4px; background: #11151a; }
    .scroll span { display: block; width: 44%; height: 14px; border-radius: 7px; background: #586067; }
    .gap { height: 12px; background: #1e262e; }
    io-panel { margin-bottom: 10px; }
    .grip { position: absolute; right: 4px; bottom: 4px; color: #b4b8bb; }
  `];

  private logo() {
    const rows = Array.from({ length: 11 }, (_, i) => i * 7 - 16);
    const stripes = rows.map((y) => svg`<path d="M-6 ${y + 9}C4 ${y + 11} 10 ${y + 9} 15 ${y + 5}C20 ${y + 1} 25 ${y - 4} 34 ${y - 7}C28 ${y - 2} 23 ${y + 3} 17 ${y + 8}C11 ${y + 13} 4 ${y + 15} -6 ${y + 13}Z"/>`);
    return svg`<svg width="58" height="58" viewBox="0 0 58 58">
      <defs><clipPath id="disc"><circle cx="29" cy="29" r="28.500"/></clipPath>
        <linearGradient id="sky" gradientUnits="userSpaceOnUse" x1="10" y1="0" x2="48" y2="58"><stop offset="0" stop-color="#86d5e8"/><stop offset="1" stop-color="#3f9ad0"/></linearGradient>
        <linearGradient id="sky-turned" gradientUnits="userSpaceOnUse" x1="48" y1="58" x2="10" y2="0"><stop offset="0" stop-color="#86d5e8"/><stop offset="1" stop-color="#3f9ad0"/></linearGradient></defs>
      <g clip-path="url(#disc)" stroke="none">
        <g fill="url(#sky)" transform="rotate(-10 29 29)">${stripes}</g>
        <g fill="url(#sky-turned)" transform="rotate(170 29 29)">${stripes}</g>
      </g></svg>`;
  }

  render() {
    const modules = [
      { name: "Stem EQ", icon: "sprout", on: true, levels: [[42, 4], [38, 8]] },
      { name: "Low End Focus", icon: "focus", on: true, levels: [] },
      { name: "Bass Control", icon: "speaker", on: true, selected: true, levels: [[42, 4]] },
      { name: "Clarity", icon: "eye", on: true, levels: [[44, 4], [44, 4]] },
      { name: "Equalizer 1", icon: "curve", on: false, levels: [] },
      { name: "Equalizer 2", icon: "curve", on: false, levels: [] },
      { name: "", icon: "", on: false, levels: [] },
    ];
    const tooth = Array.from({ length: 8 }, (_, i) => {
      const a = i * 45;
      return `${i ? "L" : "M"}${polar(15, a - 14)}L${polar(19, a - 9)}A19 19 0 0 1 ${polar(19, a + 9)}L${polar(15, a + 14)}A15 15 0 0 1 ${polar(15, a + 31)}`;
    }).join("") + "Z";
    return html`<div class="window">
      <div class="titlebar">
        <div class="lights"><button class="red" aria-label="Close"></button><button class="gray" aria-label="Minimize"></button><button class="green" aria-label="Zoom window"></button></div>
        <span>Ozone 12/1-01_Finished mix</span>
      </div>
      <div class="body">
        <header class="header">
          <div class="brand">${this.logo()}<div><span class="word">OZONE</span><span class="edition">ADVANCED</span></div></div>
          <nav class="modes"><span class="mode-name">Full Mix</span>
            <div class="mode-set">
              <button class="mode active" aria-label="Full mix">${waveIcon}</button>
              <button class="mode" aria-label="Vocals">${voiceIcon}</button>
              <button class="mode" aria-label="Drums">${drumIcon}</button>
              <button class="mode" aria-label="Bass">${ampIcon}</button>
            </div>
          </nav>
          <div class="views">
            <button class="viewtab" aria-label="Assistant view"><svg width="50" height="46" viewBox="0 0 50 46">
              <defs>
                <linearGradient id="orb" x1="0.500" y1="0" x2="0.500" y2="1"><stop offset="0" stop-color="#c4552e"/><stop offset="0.450" stop-color="#6d4a50"/><stop offset="1" stop-color="#3462c8"/></linearGradient>
                <radialGradient id="core"><stop offset="0" stop-color="#15161c"/><stop offset="0.500" stop-color="#1c1a22" stop-opacity="0.850"/><stop offset="1" stop-color="#1c1a22" stop-opacity="0"/></radialGradient>
                <radialGradient id="pearl" cx="0.400" cy="0.300"><stop offset="0.300" stop-color="#fff"/><stop offset="1" stop-color="#b4b4b6"/></radialGradient>
                <clipPath id="orb-clip"><circle cx="25" cy="22" r="21"/></clipPath>
              </defs>
              <g stroke="none"><circle cx="25" cy="22" r="21" fill="url(#orb)"/>
              <g clip-path="url(#orb-clip)"><ellipse cx="6" cy="24" rx="9" ry="15" fill="#a5a0d0" opacity="0.400"/><circle cx="43" cy="16" r="14" fill="#e09064" opacity="0.500"/><circle cx="38" cy="36" r="14" fill="#3c6ad0" opacity="0.600"/><ellipse cx="22" cy="22" rx="14" ry="19" fill="url(#core)"/></g>
              <circle cx="8" cy="38" r="7" fill="url(#pearl)"/><circle cx="44.500" cy="4.500" r="3.800" fill="url(#pearl)"/></g>
            </svg></button>
            <button class="viewtab" aria-label="Module view"><svg width="54" height="40" viewBox="0 0 54 40"><defs><linearGradient id="slab" x1="0" y1="0" x2="0" y2="1"><stop offset="0" stop-color="#dcdee0"/><stop offset="1" stop-color="#a9adb2"/></linearGradient></defs>
              <g fill="#f4f5f6" stroke="none"><rect width="14" height="10" rx="1"/><rect x="20" width="14" height="10" rx="1"/><rect x="40" width="14" height="10" rx="1"/><rect y="16" width="54" height="24" rx="1" fill="url(#slab)"/></g></svg></button>
          </div>
          <div class="preset">
            <button aria-label="Preset list">${listIcon}</button>
            <button aria-label="Previous preset"><svg width="17" height="24" viewBox="0 0 17 24"><path class="solid" d="M1 12L17 0V24z"/></svg></button>
            <button aria-label="Next preset"><svg width="17" height="24" viewBox="0 0 17 24"><path class="solid" d="M17 12L1 0V24z"/></svg></button>
          </div>
          <div class="actions">
            <button class="edit" aria-label="Edit"><svg width="24" height="24" viewBox="0 0 24 24"><path class="solid" d="M20 0.500Q21.500 -0.500 23 1Q25 2.500 23.500 4.500L10 18.500L5 14.500zM4 16.500L8 20L0 24z"/></svg></button>
            <button aria-label="Undo"><svg width="32" height="26" viewBox="0 0 32 26"><path d="M9 6H21A9.500 9.500 0 0 1 21 25H11"/><path class="solid" d="M0 6L10 0V12z"/></svg></button>
            <button aria-label="History"><svg width="40" height="36" viewBox="0 0 40 36"><path d="M5 18A17 17 0 1 1 13 32.500M21 11V20L28 26"/><path class="solid" d="M0 17H10L5 27z"/></svg></button>
            <button aria-label="Settings"><svg width="40" height="40" viewBox="-20 -20 40 40"><path d=${tooth}/><circle r="7.500"/></svg></button>
            <button aria-label="Help"><svg width="40" height="40" viewBox="0 0 40 40"><circle cx="20" cy="20" r="19"/><path d="M15 15C15 11 17 9.500 20 9.500S25.500 11.500 25 15C24.500 18.500 20.500 19 20.500 24V25"/><circle class="solid" cx="20.500" cy="30" r="2"/></svg></button>
          </div>
          <div class="marks">
            <svg width="46" height="48" viewBox="0 0 46 48" stroke-linejoin="round"><g class="solid"><circle cx="23" cy="3" r="2.500"/><circle cx="23" cy="45" r="2.500"/><circle cx="23" cy="24" r="4"/></g><path d="M23 3C30 12 44 16 45 23C44 29 34 28 23 24C12 20 2 20 1 26C2 32 16 36 23 45"/><path d="M23 3C21 12 6 30 11 36C16 38 19 29 23 24C27 19 30 10 35 12C40 18 25 36 23 45"/></svg>
            <span class="bar"></span>
            <svg width="50" height="28" viewBox="0 0 50 28"><path d="M4 27V10Q4 4 9 4Q12 4 15 7L36 25" style="stroke-width:8px"/><path d="M45.500 0V28" style="stroke-width:8px"/></svg>
          </div>
        </header>
        <div class="main">
          <div class="left">
            <div class="chain">${modules.map((m) => html`<module-card .name=${m.name} .icon=${m.icon} .on=${m.on} .selected=${!!m.selected} .levels=${m.levels}></module-card>`)}</div>
            <div class="scroll"><span></span></div>
            <div class="gap"></div>
            <bass-control></bass-control>
          </div>
          <io-panel></io-panel>
        </div>
        <svg class="grip" width="16" height="16" viewBox="0 0 16 16"><path d="M0 16L16 0M7 16L16 7M13 16L16 13"/></svg>
      </div>
    </div>`;
  }
}
